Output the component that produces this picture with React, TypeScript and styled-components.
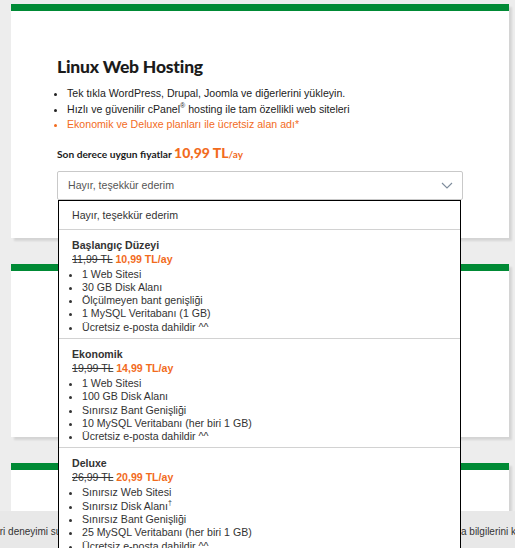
import styled, { createGlobalStyle } from "styled-components";

const GlobalStyle = createGlobalStyle`
  html, body {
    margin: 0;
    padding: 0;
    overflow: hidden;
    background: #ededed;
    font-family: "Liberation Sans", Arial, sans-serif;
  }
`;

type Plan = {
  name: string;
  oldPrice: string;
  price: string;
  features: { text: string; sup?: string }[];
};

const plans: Plan[] = [
  {
    name: "Başlangıç Düzeyi",
    oldPrice: "11,99 TL",
    price: "10,99 TL/ay",
    features: [
      { text: "1 Web Sitesi" },
      { text: "30 GB Disk Alanı" },
      { text: "Ölçülmeyen bant genişliği" },
      { text: "1 MySQL Veritabanı (1 GB)" },
      { text: "Ücretsiz e-posta dahildir ^^" },
    ],
  },
  {
    name: "Ekonomik",
    oldPrice: "19,99 TL",
    price: "14,99 TL/ay",
    features: [
      { text: "1 Web Sitesi" },
      { text: "100 GB Disk Alanı" },
      { text: "Sınırsız Bant Genişliği" },
      { text: "10 MySQL Veritabanı (her biri 1 GB)" },
      { text: "Ücretsiz e-posta dahildir ^^" },
    ],
  },
  {
    name: "Deluxe",
    oldPrice: "26,99 TL",
    price: "20,99 TL/ay",
    features: [
      { text: "Sınırsız Web Sitesi" },
      { text: "Sınırsız Disk Alanı", sup: "†" },
      { text: "Sınırsız Bant Genişliği" },
      { text: "25 MySQL Veritabanı (her biri 1 GB)" },
      { text: "Ücretsiz e-posta dahildir ^^" },
    ],
  },
];

const App = () => {
  return (
    <>
      <GlobalStyle />
      <Page>
        <Card $height={227}>
          <Title>Linux Web Hosting</Title>
          <Features>
            <li>Tek tıkla WordPress, Drupal, Joomla ve diğerlerini yükleyin.</li>
            <li>
              Hızlı ve güvenilir cPanel<sup>®</sup> hosting ile tam özellikli web siteleri
            </li>
            <li className="promo">Ekonomik ve Deluxe planları ile ücretsiz alan adı*</li>
          </Features>
          <PriceLine>
            Son derece uygun fiyatlar <strong>10,99 TL</strong>
            <small>/ay</small>
          </PriceLine>
          <SelectWrap>
            <SelectBox>
              <span>Hayır, teşekkür ederim</span>
              <svg width="12" height="7" viewBox="0 0 12 7">
                <path d="M1 1l5 5 5-5" fill="none" stroke="#7d8c9c" strokeWidth="1.1" />
              </svg>
            </SelectBox>
            <Dropdown>
              <NoOption>Hayır, teşekkür ederim</NoOption>
              {plans.map((plan) => (
                <PlanOption key={plan.name}>
                  <PlanName>{plan.name}</PlanName>
                  <PlanPrice>
                    <s>{plan.oldPrice}</s> <b>{plan.price}</b>
                  </PlanPrice>
                  <PlanList>
                    {plan.features.map((f) => (
                      <li key={f.text}>
                        {f.text}
                        {f.sup && <sup>{f.sup}</sup>}
                      </li>
                    ))}
                  </PlanList>
                </PlanOption>
              ))}
            </Dropdown>
          </SelectWrap>
        </Card>
        <Card $height={166} />
        <Card $height={120} />
      </Page>
      <CookieBar>
        <CookieLeft>Size en iyi müşteri deneyimi sun</CookieLeft>
        <CookieRight>a bilgilerini kullanmaktayız</CookieRight>
      </CookieBar>
    </>
  );
};

const Page = styled.div`
  display: flex;
  flex-direction: column;
  gap: 26px;
  padding: 4px 6px 0 11px;
  width: 498px;
`;

const Card = styled.section<{ $height: number }>`
  position: relative;
  box-sizing: content-box;
  height: ${(p) => p.$height}px;
  background: #fff;
  border-top: 7px solid #008a35;
  box-shadow: 3px 3px 2px rgba(0, 0, 0, 0.1);
  padding: 0 46px;
  &:first-child {
    z-index: 2;
  }
`;

const Title = styled.h1`
  margin: 45px 0 0;
  font-family: Lato, "Noto Sans", sans-serif;
  font-weight: 900;
  font-size: 17.5px;
  line-height: 22px;
  color: #1b1b1b;
  letter-spacing: -0.2px;
`;

const Features = styled.ul`
  margin: 8px 0 0 -2px;
  padding-left: 12px;
  font-size: 10.6px;
  line-height: 15.5px;
  color: #222;
  sup {
    font-size: 7px;
    line-height: 0;
  }
  .promo {
    color: #f26b1d;
  }
`;

const PriceLine = styled.div`
  margin-top: 10px;
  font-family: Lato, "Noto Sans", sans-serif;
  font-weight: 700;
  font-size: 10.2px;
  line-height: 20px;
  color: #1b1b1b;
  strong {
    font-size: 14px;
    color: #f26b1d;
  }
  small {
    font-size: 10px;
    color: #f26b1d;
  }
`;

const SelectWrap = styled.div`
  position: relative;
  margin-top: 7px;
`;

const SelectBox = styled.div`
  display: flex;
  align-items: center;
  justify-content: space-between;
  box-sizing: border-box;
  height: 29px;
  padding: 0 9px 0 10px;
  border: 1px solid #c9c9c9;
  border-radius: 2px;
  font-size: 10.6px;
  color: #555;
`;

const Dropdown = styled.div`
  position: absolute;
  top: 100%;
  left: 1px;
  width: 403px;
  box-sizing: border-box;
  background: #fff;
  border: 1px solid #000;
  z-index: 5;
  font-size: 10.6px;
  color: #333;
`;

const NoOption = styled.div`
  height: 28px;
  line-height: 28px;
  padding: 0 13px;
  border-bottom: 1px solid #d2d2d2;
`;

const PlanOption = styled.div`
  padding: 8px 13px 4px;
  border-bottom: 1px solid #d2d2d2;
`;

const PlanName = styled.div`
  font-weight: 700;
  line-height: 14px;
  color: #333;
`;

const PlanPrice = styled.div`
  line-height: 14px;
  s {
    color: #333;
  }
  b {
    color: #f26b1d;
  }
`;

const PlanList = styled.ul`
  margin: 2px 0 0 -2px;
  padding-left: 12px;
  line-height: 13.3px;
  sup {
    font-size: 7px;
    line-height: 0;
  }
`;

const CookieBar = styled.div`
  position: fixed;
  left: 0;
  right: 0;
  bottom: 0;
  height: 37px;
  box-sizing: border-box;
  padding-top: 3px;
  background: #e8e8e8;
  display: flex;
  justify-content: space-between;
  align-items: center;
  font-size: 10px;
  color: #333;
  white-space: nowrap;
  z-index: 1;
`;

const CookieLeft = styled.div`
  width: 67px;
  overflow: hidden;
  display: flex;
  justify-content: flex-end;
`;

const CookieRight = styled.div`
  width: 54px;
  overflow: hidden;
`;

export default App;
